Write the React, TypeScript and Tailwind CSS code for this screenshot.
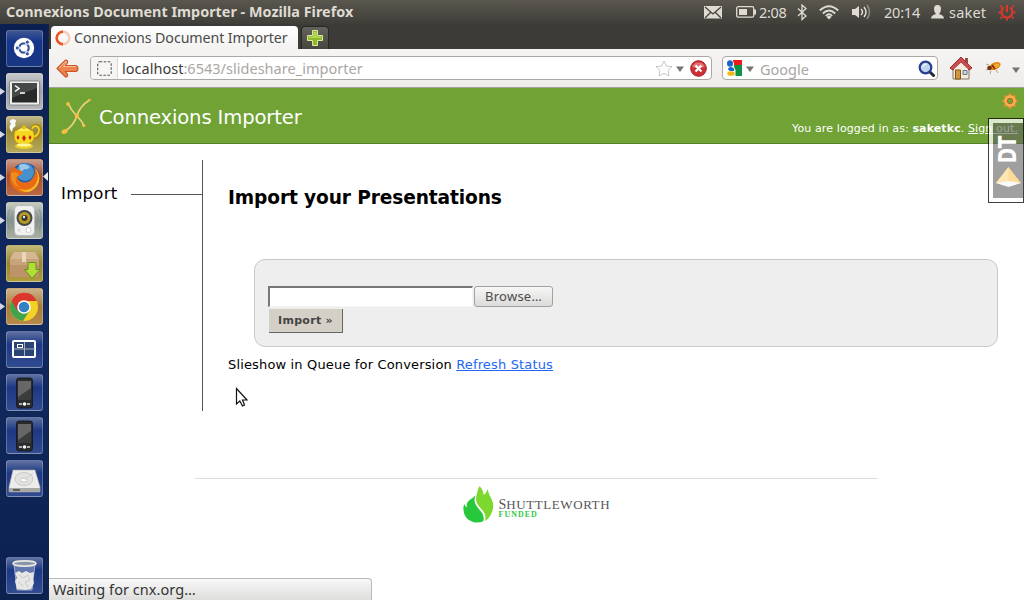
import React from "react";

const ui = "font-['Noto_Sans','Open_Sans',sans-serif]";
const verdana = "font-['DejaVu_Sans',sans-serif]";

function Tile({ bg, left, right, children }: { bg: string; left?: boolean; right?: boolean; children: React.ReactNode }) {
  return (
    <div className="relative flex h-[37px] w-[49px] shrink-0 items-center pl-1.5">
      {left && (
        <svg className="absolute left-0 top-[14px]" width="5" height="9" viewBox="0 0 5 9">
          <path d="M0 1 L5 4.5 L0 8Z" fill="#d5d8e0" />
        </svg>
      )}
      <div className={"h-[37px] w-[37px] overflow-hidden rounded-[3px] border border-white/25 shadow-[0_0_1px_#00000080] " + bg}>
        <svg className="-m-px block" width="37" height="37" viewBox="0 0 37 37">{children}</svg>
      </div>
      {right && (
        <svg className="absolute right-[1px] top-[13px]" width="5" height="9" viewBox="0 0 5 9">
          <path d="M5 0 L0 4.5 L5 9Z" fill="#e6e8ed" />
        </svg>
      )}
    </div>
  );
}

const blue = "bg-gradient-to-b from-[#6070a0] via-[#1d3883] via-35% to-[#304b90] border-white/15";

function Phone() {
  return (
    <g>
      <rect x="10.500" y="4" width="16" height="30" rx="2.5" fill="#292a2b" stroke="#101420" strokeWidth=".8" />
      <rect x="12" y="7" width="13" height="19" fill="#3b3c3c" />
      <path d="M12 7h13v7L12 23z" fill="#666766" />
      <path d="M13 30h3M21 30h3" stroke="#ddd" strokeWidth="1.6" />
      <circle cx="18.500" cy="30" r="1.800" fill="#fff" />
    </g>
  );
}

function Launcher() {
  return (
    <aside className="flex w-[49px] shrink-0 flex-col gap-1.5 border-r border-[#16233f] bg-[#10265a] bg-gradient-to-b from-[#0b1f50] via-[#112a60] to-[#0c214e] pt-1.5">
      <Tile bg="bg-gradient-to-b from-[#3d5590] via-[#17358b] via-30% to-[#183782] border-white/10">
        <circle cx="18" cy="18" r="10.200" fill="#fff" />
        <circle cx="18" cy="18" r="4.700" fill="none" stroke="#3654a0" strokeWidth="2.300" />
        <path d="M18 18 L11.500 18M18 18L21.300 12.300M18 18L21.300 23.700" stroke="#fff" strokeWidth="1" />
        <circle cx="18" cy="18" r="3.300" fill="#fff" />
        <g fill="#3654a0" stroke="#fff" strokeWidth="1"><circle cx="11.300" cy="18" r="2.100" /><circle cx="21.300" cy="12.200" r="2.100" /><circle cx="21.300" cy="23.800" r="2.100" /></g>
      </Tile>
      <Tile left bg="bg-gradient-to-b from-[#c6c8cb] via-[#9b9ea4] to-[#b5b7ba]">
        <rect x="3.500" y="8" width="30" height="24" rx="1" fill="#eeeeed" stroke="#777" strokeWidth=".8" />
        <rect x="6" y="10" width="25" height="19.500" fill="#272a29" />
        <path d="M6 10h25v5L6 25z" fill="#454948" />
        <path d="M9 12.500l4 3-4 3M14 20h5" stroke="#fff" strokeWidth="1.500" fill="none" />
      </Tile>
      <Tile left bg="bg-gradient-to-b from-[#c1b98b] via-[#988838] via-40% to-[#b5a75b]">
        <path d="M26 13c1-5 8-5 8 1s-4 8-9 9" fill="none" stroke="#a98210" strokeWidth="2.600" />
        <path d="M26 13c1-4 7-4 7 1s-4 7-8 8" fill="none" stroke="#f4d71f" strokeWidth="1.600" />
        <path d="M6 16q5 1 5 7l3 2V18z" fill="#e6bd18" />
        <path d="M9 15Q18 10 27 15Q31 25 22 28H13Q6 25 9 15Z" fill="#f5d91e" stroke="#c99a13" strokeWidth=".7" />
        <path d="M11 15Q18 8 25 15Z" fill="#ffef61" />
        <circle cx="18" cy="11.500" r="2" fill="#e9bf13" />
        <path d="M12 19l1.500 2.500L12 24l-1.500-2.500zM18 19l2 3-2 3.500-2-3.500zM24 19l1.500 2.500L24 24l-1.500-2.500z" fill="#c9241a" />
        <ellipse cx="18" cy="30" rx="9" ry="3" fill="#ead127" />
        <ellipse cx="18" cy="29" rx="7" ry="1.600" fill="#fff59b" />
        <path d="M5 15Q2 11 5 8Q2 4 7 3Q12 4 9 7Q11 10 7 12L6 16Z" fill="#f8f8f7" />
      </Tile>
      <Tile left right bg="bg-gradient-to-b from-[#c79c8c] via-[#a7502b] via-45% to-[#b96a42]">
        <circle cx="19" cy="18" r="14" fill="#1f5ca8" />
        <circle cx="19" cy="13" r="9" fill="#4790ce" />
        <path d="M13 6q6-3 11 2-2 3-6 2-1 3-4 2z" fill="#9bc8e9" />
        <path d="M5 11Q7 6 8 8Q11 11 16 12Q17 16 12 17Q10 19 14 22Q18 25 24 22Q31 16 28 8Q37 17 31 27Q24 36 13 33Q2 27 4 16Z" fill="#e96a12" />
        <path d="M28 8q7 9 1 18-7 8-17 3Q22 38 31 27q6-10-3-19z" fill="#f6b82c" />
        <path d="M5 14q4-2 8 1l-3 4q-2 5 4 9Q5 27 5 14z" fill="#ef8d1f" />
      </Tile>
      <Tile left bg="bg-gradient-to-b from-[#c5cac0] via-[#8c9586] to-[#a9afa2]">
        <path d="M7 9q-4 8 0 17M4 7q-5 10 0 21M30 9q4 8 0 17M33 7q5 10 0 21" fill="none" stroke="#6e8daa" strokeWidth="1.200" opacity=".6" />
        <rect x="8.500" y="3.500" width="20" height="30" rx="4" fill="#eff0ef" stroke="#b7bab8" />
        <circle cx="18.500" cy="16" r="8" fill="#454849" />
        <circle cx="18.500" cy="16" r="6" fill="#b69b25" />
        <circle cx="18.500" cy="16" r="3" fill="#353839" />
        <circle cx="18" cy="15" r="1.200" fill="#eee" />
        <circle cx="22.500" cy="28" r="2.500" fill="#fff" stroke="#ccc" />
        <circle cx="13" cy="28" r="1.500" fill="#d5d5d5" />
      </Tile>
      <Tile bg="bg-gradient-to-b from-[#c2b878] via-[#9a8530] to-[#af9d3d]">
        <path d="M8 7H29L33 14H4Z" fill="#d5b794" />
        <rect x="4" y="14" width="29" height="18" fill="#bd936a" />
        <path d="M4 14h29v6H4z" fill="#c9a37b" />
        <path d="M16 7h4v10h-4z" fill="#ead6bb" />
        <path d="M22 17.500h8v7h4L26 33.500l-7.500-9h3.500z" fill="#afdf35" stroke="#678e22" />
      </Tile>
      <Tile left bg="bg-gradient-to-b from-[#cdb28a] via-[#aa7b38] to-[#b78a4c]">
        <circle cx="18" cy="19" r="14" fill="#f4d225" />
        <path d="M18 19L5.600 12.500A14 14 0 0 0 17 33L24 22Z" fill="#42a34b" />
        <path d="M18 19L11 22.500L5.600 12.500A14 14 0 0 1 30.800 13H18Z" fill="#da382d" />
        <circle cx="18" cy="19" r="6.800" fill="#fff" />
        <circle cx="18" cy="19" r="5.300" fill="#3480c3" />
      </Tile>
      <Tile bg={blue}>
        <rect x="7" y="10" width="22" height="16" rx="1" fill="#294475" stroke="#fff" strokeWidth="2" />
        <path d="M18.500 11v14M8 18h21" stroke="#aab2bc" />
        <rect x="11.500" y="13.500" width="5" height="3" fill="none" stroke="#fff" />
      </Tile>
      <Tile bg={blue}><Phone /></Tile>
      <Tile bg={blue}><Phone /></Tile>
      <Tile bg={blue}>
        <path d="M7 10H29L34 27V32H3V27Z" fill="#ececea" stroke="#aaa" strokeWidth=".6" />
        <ellipse cx="18" cy="19" rx="9" ry="6.500" fill="#e2e3e1" stroke="#c8c8c8" />
        <ellipse cx="18" cy="20" rx="4" ry="2" fill="#fafafa" stroke="#aaa" strokeWidth=".6" />
        <path d="M19 20l8-7" stroke="#ccc" />
        <path d="M3 28H34V32H3Z" fill="#a9a9a6" />
        <path d="M7 30h7" stroke="#444" strokeWidth="1.500" />
      </Tile>
      <div className="mt-auto pb-[6px]">
        <Tile bg={blue}>
          <path d="M8 7L11 33H26L29 7Z" fill="#8ea0c4" fillOpacity=".6" stroke="#b7c0d8" strokeWidth=".8" />
          <path d="M9 16l4-2 3 2 4-2 4 2 4-1-1 7 1 4-3 6-6 1-8-1-2-8 2-3z" fill="#e6e6e4" />
          <path d="M13 18l4 3 5-3 2 5-5 2 3 5M12 25l5 4" stroke="#c9cac7" fill="none" />
          <ellipse cx="18.500" cy="6.500" rx="11.500" ry="2.600" fill="#8995ab" stroke="#e7e7e4" strokeWidth="1.600" />
        </Tile>
      </div>
    </aside>
  );
}

function TopBar() {
  return (
    <header className={"flex h-6 shrink-0 items-center justify-between bg-gradient-to-b from-[#59574e] to-[#3f3e39] text-[#dfdbd2] " + ui}>
      <span className="whitespace-nowrap pl-1.5 text-[14.4px] font-bold leading-6">Connexions Document Importer - Mozilla Firefox</span>
      <div className="flex h-6 w-[320px] items-center whitespace-nowrap text-[14.5px] leading-6">
        <svg width="19" height="13" viewBox="0 0 19 13"><rect width="18" height="12.500" fill="#dfdbd2" /><path d="M1 1L9 8L17 1M1 12l6-6M17 12l-6-6" stroke="#45433e" fill="none" strokeWidth="1.300" /></svg>
        <svg className="ml-[13px]" width="20" height="12" viewBox="0 0 20 12"><rect x=".7" y=".7" width="17" height="10.500" rx="1.500" fill="none" stroke="#dfdbd2" strokeWidth="1.300" /><path d="M3 3h8v6H3z" fill="#dfdbd2" /><path d="M19 3.500v5" stroke="#dfdbd2" strokeWidth="2" /></svg>
        <span className="ml-[3px] w-[30px] tracking-[-0.3px]">2:08</span>
        <svg className="ml-[8px]" width="10" height="17" viewBox="0 0 10 17"><path d="M1 4.500L9 12L5 15.500V1L9 4.500L1 12" fill="none" stroke="#dfdbd2" strokeWidth="1.300" /></svg>
        <svg className="ml-[12px]" width="20" height="15" viewBox="0 0 20 15"><g fill="none" stroke="#dfdbd2" strokeWidth="1.800"><path d="M.8 5.500Q10-3 19.200 5.500M3.800 8.500Q10 2.500 16.200 8.500M6.800 11Q10 7.500 13.200 11" /></g><path d="M7.500 12Q10 9.500 12.500 12L10 14.500Z" fill="#dfdbd2" /></svg>
        <svg className="ml-[12px]" width="20" height="16" viewBox="0 0 20 16"><path d="M1 5h3l4-3v12l-4-3H1z" fill="#dfdbd2" /><g fill="none" stroke="#dfdbd2" strokeWidth="1.500"><path d="M10 5q3 3 0 6M13 3q4 5 0 10" /><path d="M16 1q5 7 0 14" opacity=".45" /></g></svg>
        <span className="ml-[13px] w-[37px] tracking-[-0.2px]">20:14</span>
        <svg className="ml-[10px]" width="13" height="14" viewBox="0 0 13 14"><path d="M6.500 0Q10 0 10 4Q10 7 8 9Q13 10 13 13.500H0Q0 10 5 9Q3 7 3 4Q3 0 6.500 0Z" fill="#dfdbd2" /></svg>
        <span className="ml-[5px] w-[38px] tracking-[0.2px]">saket</span>
        <svg className="ml-[11px]" width="18" height="18" viewBox="0 0 18 18"><g fill="none" stroke="#df382c"><path d="M6 4.400A5.500 5.500 0 1 0 12 4.400" strokeWidth="2.200" /><path d="M9 2v7" strokeWidth="2" /><path d="M3.700 4L2 2.700M2.500 9.500H.5M4 14l-1.500 1.500M9 15.500v2M14 14l1.500 1.500M15.500 9.500h2M14.300 4L16 2.700" strokeWidth="2" /></g></svg>
      </div>
    </header>
  );
}

function TabStrip() {
  return (
    <div className={"flex h-[25px] shrink-0 items-end bg-[#3c3b37] " + ui}>
      <div className="ml-[2px] flex h-[23px] w-[247px] items-center whitespace-nowrap rounded-t-[4px] bg-gradient-to-b from-white to-[#f3f2f1] pl-1 text-[14.25px] leading-[23px] text-[#4a4a48]">
        <svg width="16" height="16" viewBox="0 0 16 16"><circle cx="8" cy="8" r="6.300" fill="none" stroke="#f6c9b7" strokeWidth="2.400" /><path d="M8 1.700A6.300 6.300 0 0 0 8 14.300" fill="none" stroke="#e95420" strokeWidth="2.600" /></svg>
        <span className="ml-[3px] tracking-[-0.1px]">Connexions Document Importer</span>
      </div>
      <div className="ml-[3px] flex h-[23px] w-[28px] items-center justify-center rounded-t-[4px] border border-b-0 border-[#282724] bg-gradient-to-b from-[#64635d] to-[#464540]">
        <svg width="16" height="16" viewBox="0 0 16 16"><path d="M5.500 .5h5v5h5v5h-5v5h-5v-5h-5v-5h5z" fill="#90b82e" stroke="#dbea9d" /><path d="M6.500 2h3v4.500H14v1.500H2V6.500h4.500z" fill="#b6d659" /></svg>
      </div>
    </div>
  );
}

function Down() {
  return <svg width="8" height="6" viewBox="0 0 8 6"><path d="M0 .5h8L4 6z" fill="#777570" /></svg>;
}

function Toolbar() {
  return (
    <div className={"flex h-[39px] shrink-0 items-center border-b border-[#a3a19e] bg-gradient-to-b from-[#f5f4f3] to-[#eeedeb] " + ui}>
      <svg className="ml-[7px]" width="23" height="19" viewBox="0 0 23 19"><path d="M1 9.500L9.500 1Q12 1 11.500 3.500L9.500 6.500H20Q22 7 22 9.500T20 12.500H9.500L11.500 15.500Q12 18 9.500 18Z" fill="#ed8350" stroke="#c8552a" strokeWidth="1.200" /><path d="M3 9l7-7 .5 1L7.500 7.500H20" fill="none" stroke="#f8be94" /></svg>
      <div className="ml-[11px] flex h-6 w-[622px] items-center overflow-hidden rounded-[4px] border border-[#aaa8a4] bg-white">
        <div className="flex h-full w-[27px] shrink-0 items-center justify-center border-r border-[#dcdad7] bg-[#f6f5f4]"><svg width="15" height="15" viewBox="0 0 15 15"><rect x=".7" y=".7" width="13.500" height="13.500" rx="2" fill="none" stroke="#555" strokeDasharray="2.500 1.500" strokeWidth="1.100" /></svg></div>
        <span className="ml-[4px] w-[530px] whitespace-nowrap text-[14.5px] leading-[22px] tracking-[0.02px] text-[#aaa6a3]"><span className="text-[#3c3c3c]">localhost</span>:6543/slideshare_importer</span>
        <svg className="ml-[3px] shrink-0" width="18" height="17" viewBox="0 0 18 17"><path d="M9 1l2.400 5 5.600.7-4 3.800 1 5.500L9 13.300 4 16l1-5.500L1 6.700 6.600 6z" fill="#fff" stroke="#c8c6c3" strokeLinejoin="round" /></svg>
        <span className="ml-[3px] shrink-0 pt-[2px]"><Down /></span>
        <svg className="ml-[6px] shrink-0" width="17" height="17" viewBox="0 0 17 17"><circle cx="8.500" cy="8.500" r="7.800" fill="#cc3035" stroke="#a51d22" /><path d="M2 7A7 7 0 0 1 15 7Q8 9 2 7Z" fill="#e17276" /><path d="M5.500 5.500l6 6M11.500 5.500l-6 6" stroke="#fff" strokeWidth="2.300" /></svg>
      </div>
      <div className="ml-[10px] flex h-6 w-[216px] items-center rounded-[4px] border border-[#aaa8a4] bg-white pl-[3px]">
        <svg width="16" height="16" viewBox="0 0 16 16"><path d="M7 0h9v5H8z" fill="#ed1a1a" /><path d="M8 5h8v11H9z" fill="#119347" /><path d="M0 0h6Q9 4 7 7Q10 9 9.500 12V16H0z" fill="#fff" /><ellipse cx="4" cy="3.500" rx="3" ry="3.200" fill="#1a63c7" /><path d="M4 7q5 0 4 4H4Q0 9 4 7z" fill="#1a63c7" /><ellipse cx="5" cy="13.500" rx="3.700" ry="2.300" fill="#f6b713" /></svg>
        <span className="ml-[4px] flex pt-[2px]"><Down /></span>
        <span className="ml-[6px] w-[158px] pt-px text-[14.5px] leading-[22px] text-[#aaa6a3]">Google</span>
        <svg width="17" height="17" viewBox="0 0 17 17"><path d="M11 11l4.500 4.500" stroke="#252932" strokeWidth="3" strokeLinecap="round" /><circle cx="7.500" cy="7.500" r="5.800" fill="#bed3ee" stroke="#293d8f" strokeWidth="2.200" /><path d="M4.500 7q1-3 4-3" stroke="#fff" fill="none" /></svg>
      </div>
      <svg className="ml-[12px]" width="22" height="24" viewBox="0 0 22 24"><path d="M3 11h16v12H3z" fill="#f3e9df" stroke="#84736b" /><path d="M15 2h3v6h-3z" fill="#995146" /><path d="M0 12L11 1L22 12L19 14L11 6L3 14Z" fill="#c94d4e" stroke="#9d2e31" /><path d="M11 6.500L18 13V15H4V13Z" fill="#f3e9df" /><path d="M5.500 14h5v9h-5z" fill="#cf983e" stroke="#855313" /><path d="M13 14.500h4v4h-4z" fill="#c8d5df" stroke="#6b7b88" /></svg>
      <svg className="ml-[13px]" width="17" height="16" viewBox="0 0 17 16"><path d="M4 5L1 4M6 11l-1 3M11 10l2 3M3 9l-2 1" stroke="#a88d62" strokeWidth=".8" /><ellipse cx="10" cy="6" rx="6" ry="3.500" transform="rotate(-25 10 6)" fill="#df8b18" /><circle cx="4.500" cy="8" r="2.300" fill="#713416" /><path d="M7 7l6-3M9 9l5-4" stroke="#f9d453" /><path d="M7 5l3 4" stroke="#8b220f" strokeWidth="1.500" /></svg>
      <span className="ml-[10px] pt-1"><Down /></span>
    </div>
  );
}

function PageHeader() {
  return (
    <div className={"relative flex h-14 shrink-0 border-b border-[#55802a] bg-[#70a236] text-white " + verdana}>
      <svg className="ml-[12px] mt-[10px]" width="31" height="38" viewBox="0 0 31 38"><g fill="none" stroke="#edd27a" strokeWidth="1.700"><path d="M7.500 6Q10 12 15.800 18T22.500 27M28.500 2Q19 8 15.800 18T4 33" /></g><g fill="#f8bd43"><circle cx="7" cy="6" r="1.900" /><circle cx="15.800" cy="18" r="2.200" /><circle cx="22.700" cy="27.500" r="1.700" /><circle cx="28.500" cy="2" r="1.200" /><ellipse cx="3.600" cy="33.500" rx="3.200" ry="2.300" transform="rotate(-25 3.600 33.500)" /></g></svg>
      <h1 className="ml-[7px] whitespace-nowrap text-[19.6px] leading-[59px] tracking-[-0.14px]">Connexions Importer</h1>
      <div className="ml-auto flex flex-col items-end pr-[6px]">
        <svg className="mt-[5px]" width="16" height="16" viewBox="0 0 16 16"><path d="M8 0V16M0 8H16M2.400 2.400L13.600 13.600M13.600 2.400L2.400 13.600" stroke="#e08a28" strokeWidth="2.700" /><circle cx="8" cy="8" r="4.300" fill="#70a236" stroke="#f3ad50" strokeWidth="3.400" /><circle cx="8" cy="8" r="2.700" fill="none" stroke="#a85a12" strokeWidth=".8" /></svg>
        <p className="mt-[12px] whitespace-nowrap text-[11px] leading-4 tracking-[0.11px]">You are logged in as: <b>saketkc</b>. <a className="underline">Sign out.</a></p>
      </div>
      <div className="absolute right-0 top-[30px] h-[85px] w-9 border border-black/75">
        <div className="flex h-[83px] w-[34px] flex-col items-center border-b-[4px] border-l-[4px] border-t-[4px] border-white/75 bg-[#606060]/60 bg-clip-padding pt-[13px]">
          <span className="flex h-7 w-[30px] items-center justify-center"><span className="rotate-180 scale-y-[0.77] text-[24px] font-bold leading-[30px] tracking-[-0.5px] [writing-mode:vertical-rl]">DT</span></span>
          <svg className="mt-[3px]" width="25" height="20" viewBox="0 0 25 20"><path d="M12.500 0L0 16L12.500 19L25 16Z" fill="#fcdc98" /><path d="M12.500 0L0 16L12.500 14Z" fill="#ffe6b3" /><path d="M0 16L12.500 14L25 16L12.500 20Z" fill="#f9fafa" /></svg>
        </div>
      </div>
    </div>
  );
}

export default function App() {
  return (
    <div className="flex h-[600px] w-[1024px] flex-col overflow-hidden bg-white">
      <TopBar />
      <div className="flex min-h-0 flex-1">
        <Launcher />
        <main className="relative flex w-[975px] flex-col bg-white">
          <TabStrip />
          <Toolbar />
          <PageHeader />
          <div className={"flex h-[334px] shrink-0 text-black " + verdana}>
            <nav className="mt-4 flex h-[251px] w-[154px] shrink-0 border-r border-[#555] pl-[12px]">
              <span className="mt-[21px] w-[70px] text-[16.5px] leading-[26px] tracking-[0.3px]">Import</span>
              <span className="mt-[34px] h-px flex-1 bg-[#555]" />
            </nav>
            <section className="flex w-[795px] flex-col pl-[25px] pt-[40px]">
              <h2 className="whitespace-nowrap text-[18.6px] font-bold leading-7 tracking-[-0.12px]">Import your Presentations</h2>
              <form className="ml-[26px] mt-[47px] h-[88px] w-[744px] rounded-[11px] border border-[#c9c9c9] bg-[#eee] pl-[13px] pt-[26px]">
                <div className="flex items-start">
                  <div className="h-[21px] w-[205px] border-b border-l-2 border-r border-t-2 border-b-[#f5f5f5] border-l-[#777] border-r-[#f5f5f5] border-t-[#777] bg-white" />
                  <button type="button" className={"ml-px h-[21px] w-[79px] whitespace-nowrap rounded-[3px] border border-[#a3a19e] bg-gradient-to-b from-[#f7f7f6] to-[#dcdbda] text-[13px] leading-[19px] tracking-[0.25px] text-[#4c4c4c] " + ui}>Browse…</button>
                </div>
                <button type="button" className="ml-px mt-[2px] block h-[24px] w-[74px] whitespace-nowrap border-b border-r border-[#666] bg-[#d4d0c8] text-[11px] font-bold leading-[23px] tracking-[0.3px] text-[#444]">Import »</button>
              </form>
              <p className="mt-[9px] whitespace-nowrap text-[13px] leading-[18px] tracking-[0.155px]">Slieshow in Queue for Conversion <a className="text-[#2468f2] underline">Refresh Status</a></p>
            </section>
          </div>
          <footer className="ml-[146px] flex w-[683px] justify-center border-t border-[#ddd] pt-[6px]">
            <div className="ml-[2px] flex w-[150px] font-['Liberation_Serif',serif]">
              <svg className="shrink-0 overflow-visible" width="31" height="39" viewBox="0 0 31 39"><path d="M16.500 1Q20.500 5 20.500 10Q23.500 8.500 24.500 4Q26 10 28.500 14Q32 21 28.500 28Q26 34 22 36Q23.500 30 20.500 26.500C17 22 11.500 19 13.500 10Q14.500 5 16.500 1Z" fill="#7cd72e" /><path d="M12.500 10.500C9.500 18 14 22 18.500 27Q21.500 31 20.500 36Q16 38.500 10 37Q1 34 .5 25Q0 21 1.500 19Q2 22 4 22.500C2 16 9 14 12.500 10.500Z" fill="#27c83b" /></svg>
              <div className="ml-[5px] pt-[12px]">
                <div className="whitespace-nowrap text-[14px] leading-[15px] text-[#55555a]">S<span className="text-[13px] tracking-[0.58px]">HUTTLEWORTH</span></div>
                <div className="-mt-px whitespace-nowrap text-[8px] font-bold leading-[8px] tracking-[1px] text-[#35c84a]">FUNDED</div>
              </div>
            </div>
          </footer>
          <svg className="absolute left-[186px] top-[363px]" width="15" height="22" viewBox="0 0 15 22"><path d="M1.500 1.500V17L4.800 14L7.500 19L9.500 18L7.500 13H12Z" fill="#fff" stroke="#111" strokeWidth="1.200" /></svg>
          <div className={"absolute bottom-0 left-0 h-[22px] w-[323px] whitespace-nowrap rounded-tr-[4px] border-r border-t border-[#b8b8b8] bg-gradient-to-b from-[#f8f8f8] to-[#dededd] pl-1 text-[14.5px] leading-[20px] tracking-[0.05px] text-[#333] " + ui}>Waiting for cnx.org…</div>
        </main>
      </div>
    </div>
  );
}
